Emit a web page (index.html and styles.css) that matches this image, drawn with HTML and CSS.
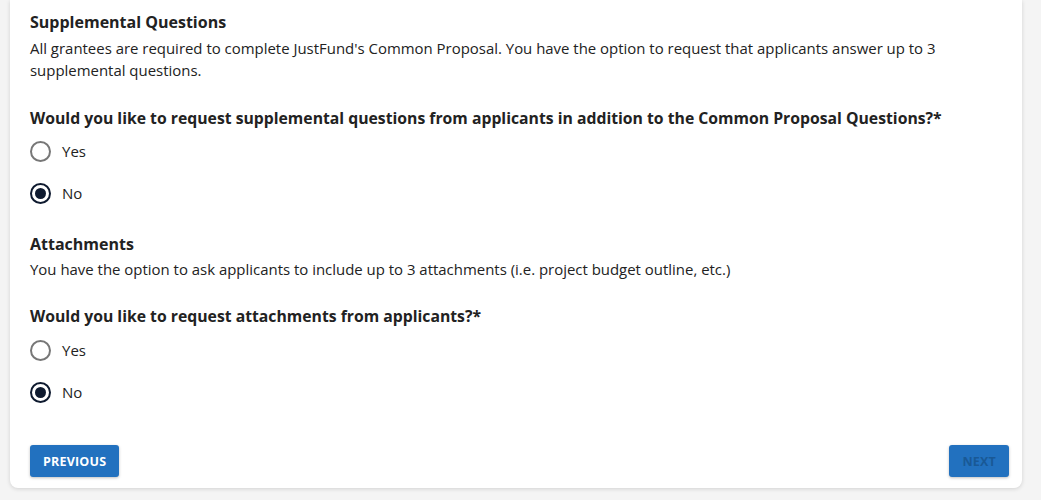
FILE: index.html
```html
<!DOCTYPE html>
<html>
<head>
<meta charset="utf-8">
<link rel="stylesheet" href="styles.css">
</head>
<body>
<div class="card">
  <h3 class="title">Supplemental Questions</h3>
  <p class="desc">All grantees are required to complete JustFund's Common Proposal. You have the option to request that applicants answer up to 3 supplemental questions.</p>
  <p class="question q1">Would you like to request supplemental questions from applicants in addition to the Common Proposal Questions?*</p>
  <div class="radios">
    <label class="radio"><span class="circle"></span><span>Yes</span></label>
    <label class="radio"><span class="circle checked"></span><span>No</span></label>
  </div>

  <h3 class="title t2">Attachments</h3>
  <p class="desc d2">You have the option to ask applicants to include up to 3 attachments (i.e. project budget outline, etc.)</p>
  <p class="question q2">Would you like to request attachments from applicants?*</p>
  <div class="radios">
    <label class="radio"><span class="circle"></span><span>Yes</span></label>
    <label class="radio"><span class="circle checked"></span><span>No</span></label>
  </div>

  <div class="actions">
    <button class="btn">PREVIOUS</button>
    <button class="btn disabled">NEXT</button>
  </div>
</div>
</body>
</html>
```
FILE: styles.css
```css
html, body {
  margin: 0;
  padding: 0;
  background: #f4f4f4;
}
body {
  font-family: "Open Sans", "Liberation Sans", sans-serif;
  color: #222;
  width: 1041px;
  height: 500px;
  overflow: hidden;
}
.card {
  margin-left: 10px;
  width: 1012px;
  box-sizing: border-box;
  background: #fff;
  border-radius: 0 0 8px 8px;
  box-shadow: 0 1px 4px rgba(0,0,0,0.14);
  padding: 11px 13px 11px 20px;
}
.title {
  margin: 0;
  font-size: 16px;
  line-height: 22px;
  font-weight: 700;
  color: #222;
}
.desc {
  margin: 4px 0 0;
  font-size: 14.95px;
  line-height: 22px;
  color: #222;
}
.question {
  margin: 26px 0 0;
  font-size: 15.75px;
  line-height: 22px;
  font-weight: 700;
  color: #222;
}
.radios {
  margin-top: 7px;
  display: flex;
  flex-direction: column;
  gap: 12px;
}
.radio {
  display: flex;
  align-items: center;
  gap: 11px;
  height: 30px;
  font-size: 15px;
  color: #222;
}
.circle {
  width: 21px;
  height: 21px;
  box-sizing: border-box;
  border: 2px solid #777;
  border-radius: 50%;
  display: flex;
  align-items: center;
  justify-content: center;
}
.circle.checked {
  border-color: #0e1a2f;
}
.circle.checked::after {
  content: "";
  width: 11px;
  height: 11px;
  border-radius: 50%;
  background: #0e1a2f;
}
.t2 { margin-top: 25px; }
.d2 { margin-top: 3px; }
.q2 { margin-top: 25px; }
.q2 + .radios { margin-top: 8px; }
.actions {
  margin-top: 38px;
  display: flex;
  justify-content: space-between;
}
.btn {
  height: 32px;
  padding: 0 13px;
  border: none;
  border-radius: 3px;
  background: #2271bf;
  color: #fff;
  font-family: "Open Sans", "Liberation Sans", sans-serif;
  font-weight: 700;
  font-size: 12.5px;
  letter-spacing: 0.2px;
  box-shadow: 0 1px 3px rgba(0,0,0,0.25);
}
.btn.disabled {
  color: #195996;
}
```
